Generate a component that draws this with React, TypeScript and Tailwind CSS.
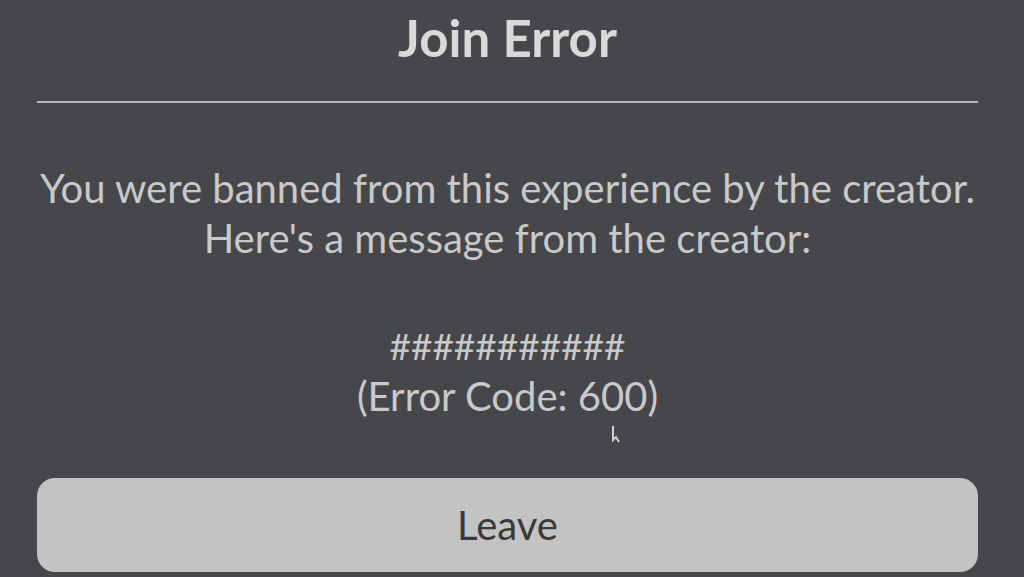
export default function App() {
  return (
    <div
      className="relative h-[577px] w-full overflow-hidden bg-[#45474a] pl-[37px] pr-[46px] flex flex-col"
      style={{ fontFamily: "Lato, 'Noto Sans', sans-serif" }}
    >
      {/* Header */}
      <h1 className="mt-[6px] text-center text-[51px] leading-[64px] font-bold text-[#d9d9d9]">
        Join Error
      </h1>
      <div className="mt-[31px] h-[2px] w-full bg-[#b9b9b9]" />

      {/* Message */}
      <div className="mt-[60px] text-center text-[40px] leading-[50px] text-[#c9c9c9]">
        <p>You were banned from this experience by the creator.</p>
        <p>Here's a message from the creator:</p>
      </div>
      <div className="mt-[57px] text-center text-[40px] leading-[51px] text-[#c9c9c9]">
        <p className="text-[37px]">###########</p>
        <p>(Error Code: 600)</p>
      </div>

      {/* Action */}
      <button className="mt-auto mb-[5px] h-[94px] w-full rounded-[18px] bg-[#c3c3c3] text-[40px] text-[#393939]">
        Leave
      </button>

      {/* mouse pointer */}
      <svg className="absolute left-[611px] top-[424px]" width="10" height="20" viewBox="0 0 10 20">
        <path d="M2 2 L2 16 L5 13 L8 18" fill="none" stroke="#d0d0d0" strokeWidth="2" />
      </svg>
    </div>
  );
}
